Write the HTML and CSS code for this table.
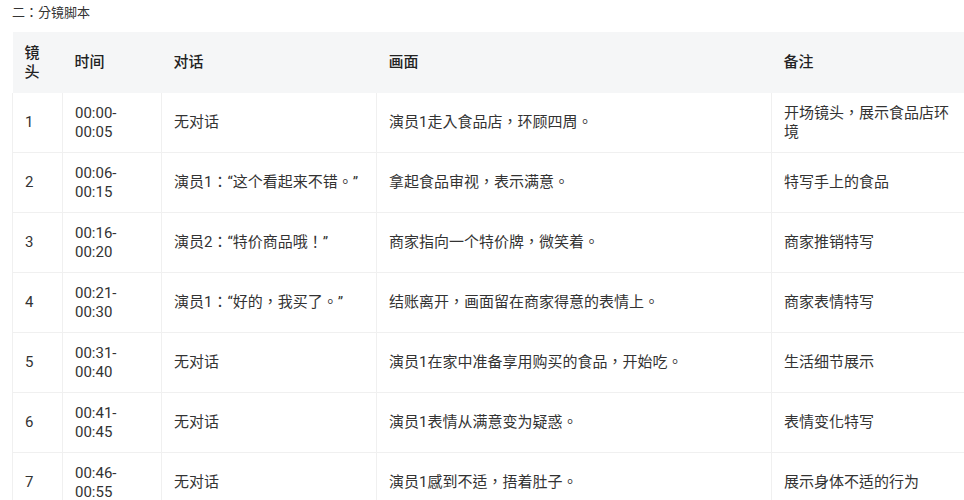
FILE: index.html
```html
<!DOCTYPE html>
<html>
<head>
    <meta charset="UTF-8">
    <title>分镜脚本</title>
    <link rel="stylesheet" href="styles.css">
</head>
<body>
<div class="page">
    <p class="title">二：分镜脚本</p>
    <table class="script">
        <colgroup>
            <col class="c-no">
            <col class="c-time">
            <col class="c-talk">
            <col class="c-scene">
            <col class="c-note">
        </colgroup>
        <thead>
        <tr>
            <th>镜头</th>
            <th>时间</th>
            <th>对话</th>
            <th>画面</th>
            <th>备注</th>
        </tr>
        </thead>
        <tbody>
        <tr>
            <td>1</td>
            <td>00:00-00:05</td>
            <td>无对话</td>
            <td>演员1走入食品店，环顾四周。</td>
            <td>开场镜头，展示食品店环境</td>
        </tr>
        <tr>
            <td>2</td>
            <td>00:06-00:15</td>
            <td>演员1：“这个看起来不错。”</td>
            <td>拿起食品审视，表示满意。</td>
            <td>特写手上的食品</td>
        </tr>
        <tr>
            <td>3</td>
            <td>00:16-00:20</td>
            <td>演员2：“特价商品哦！”</td>
            <td>商家指向一个特价牌，微笑着。</td>
            <td>商家推销特写</td>
        </tr>
        <tr>
            <td>4</td>
            <td>00:21-00:30</td>
            <td>演员1：“好的，我买了。”</td>
            <td>结账离开，画面留在商家得意的表情上。</td>
            <td>商家表情特写</td>
        </tr>
        <tr>
            <td>5</td>
            <td>00:31-00:40</td>
            <td>无对话</td>
            <td>演员1在家中准备享用购买的食品，开始吃。</td>
            <td>生活细节展示</td>
        </tr>
        <tr>
            <td>6</td>
            <td>00:41-00:45</td>
            <td>无对话</td>
            <td>演员1表情从满意变为疑惑。</td>
            <td>表情变化特写</td>
        </tr>
        <tr>
            <td>7</td>
            <td>00:46-00:55</td>
            <td>无对话</td>
            <td>演员1感到不适，捂着肚子。</td>
            <td>展示身体不适的行为</td>
        </tr>
        </tbody>
    </table>
</div>
</body>
</html>
```

FILE: styles.css
```css
html, body, p, table {
    margin: 0;
    padding: 0;
}

body {
    background: #fff;
    color: #333;
    font-family: Roboto, "Noto Sans CJK TC", sans-serif;
    font-size: 15px;
    overflow: hidden;
}

.page {
    padding: 6px 0 0 12px;
}

.title {
    font-size: 13px;
    line-height: 14px;
    color: #333;
    height: 26px;
}

.script {
    border-collapse: collapse;
    table-layout: fixed;
    width: 960px;
}

.c-no { width: 50px; }
.c-time { width: 99px; }
.c-talk { width: 215px; }
.c-scene { width: 395px; }
.c-note { width: 201px; }

.script th {
    background: #f5f6f7;
    height: 61px;
    padding: 0 12px;
    text-align: left;
    font-weight: 500;
    color: #222;
    line-height: 19px;
}

.script td {
    height: 59px;
    padding: 0 12px;
    line-height: 19px;
    border: 1px solid #f0f0f0;
}

.script tbody tr:first-child td {
    border-top: none;
}
```
